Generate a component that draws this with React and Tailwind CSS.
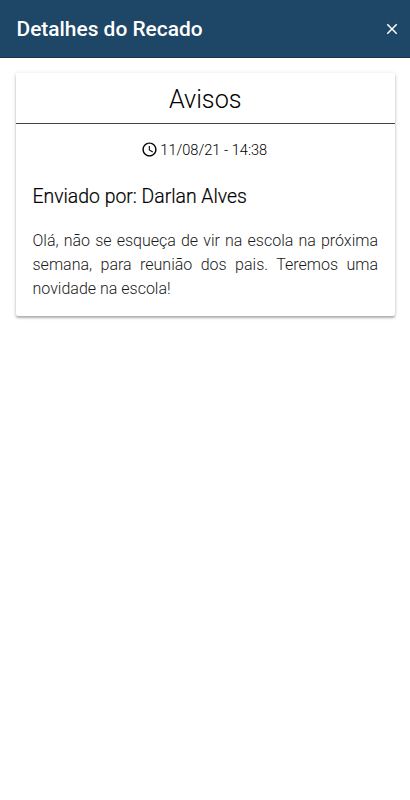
import { MdAccessTime, MdClose } from 'react-icons/md';

const notice = {
  title: 'Avisos',
  date: '11/08/21 - 14:38',
  sender: 'Darlan Alves',
  message:
    'Olá, não se esqueça de vir na escola na próxima semana, para reunião dos pais. Teremos uma novidade na escola!'
};

const App = () => {
  return (
    <div className="min-h-screen bg-white font-['Roboto',sans-serif] text-black">
      {/* Header */}
      <header className="flex h-[58px] items-center justify-between border-b border-[#16344f] bg-[#1e4666] pl-[16.5px] pr-[9px] text-white">
        <h1 className="text-[20.9px] leading-7 font-medium">Detalhes do Recado</h1>
        <button aria-label="Fechar">
          <MdClose className="size-[18px]" />
        </button>
      </header>

      {/* Notice Card */}
      <main className="pl-[15.5px] pr-[15px] pt-[15px]">
        <article className="h-[243px] rounded-[2px] bg-white shadow-[0_2px_2px_rgba(0,0,0,0.22),0_1px_4px_rgba(0,0,0,0.18)]">
          <h2 className="h-[51px] border-b border-[#444444] text-center text-[25.2px] leading-[54px] font-light">
            {notice.title}
          </h2>
          <div className="flex h-[53px] items-center justify-center gap-[2px] pr-[2px] text-[14.6px] font-light">
            <MdAccessTime className="mb-[2px] size-[17px]" />
            <span>{notice.date}</span>
          </div>
          <div className="px-[17px]">
            <h3 className="pt-[6px] text-[19.4px] leading-[28px] font-[350] [-webkit-text-stroke:0.2px]">
              Enviado por: {notice.sender}
            </h3>
            <p className="mt-[18px] text-justify text-base leading-6 font-light text-[#1a1a1a]">{notice.message}</p>
          </div>
        </article>
      </main>
    </div>
  );
};

export default App;
